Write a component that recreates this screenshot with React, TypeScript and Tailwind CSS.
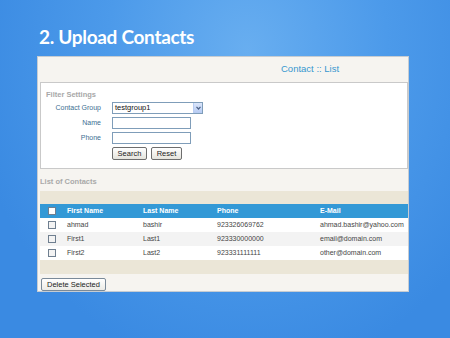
import React from 'react';

const contacts = [
  { first: 'ahmad', last: 'bashir', phone: '923326069762', email: 'ahmad.bashir@yahoo.com' },
  { first: 'First1', last: 'Last1', phone: '923330000000', email: 'email@domain.com' },
  { first: 'First2', last: 'Last2', phone: '923331111111', email: 'other@domain.com' },
];

const Checkbox: React.FC<{ header?: boolean }> = ({ header }) => (
  <span
    className={`block w-[8px] h-[8px] border border-[#6f7f90] ${
      header ? 'bg-white' : 'bg-[#f3f3f3]'
    }`}
  />
);

const XpButton: React.FC<{ label: string; className?: string }> = ({ label, className }) => (
  <button
    className={`block h-[13px] rounded-[2px] border border-[#6d6d6d] bg-[linear-gradient(#ffffff,#e4e3dc)] text-[7.5px] leading-none text-[#222] ${className ?? ''}`}
  >
    {label}
  </button>
);

export default function App() {
  return (
    <div
      className="w-[450px] h-[338px] overflow-hidden bg-[radial-gradient(ellipse_at_55%_15%,#68aef0_0%,#4c9aea_40%,#3a8ae2_80%)]"
      style={{ fontFamily: '"Liberation Sans", Arial, sans-serif' }}
    >
      {/* Slide title */}
      <h1
        className="pl-[39px] pt-[25px] h-[56px] text-[19px] font-bold text-white tracking-[-0.3px] leading-[24px]"
        style={{ fontFamily: 'Lato, "Open Sans", sans-serif' }}
      >
        2. Upload Contacts
      </h1>

      {/* Panel */}
      <div className="ml-[37px] w-[372px] h-[236px] border border-[#c6ccd2] bg-[#f6f4f0] pl-[2px] flex flex-col">
        <div className="shrink-0 h-[25px] flex items-center pl-[241px]">
          <span className="text-[9.5px] text-[#3797cf]">Contact :: List</span>
        </div>

        {/* Filter settings */}
        <div className="shrink-0 h-[87px] border border-[#c9c9c9] bg-white px-[5px] pt-[6px]">
          <div className="h-[11px] text-[7.5px] font-bold text-[#a8a8a8] leading-[11px]">Filter Settings</div>
          <div className="mt-[2px] grid grid-cols-[55px_auto] gap-x-[11px] gap-y-[3px] items-center text-[7px] text-[#3d6f92]">
            <span className="text-right">Contact Group</span>
            <div className="w-[91px] h-[12px] border border-[#7f9db9] flex items-center justify-between pl-[2px]">
              <span className="text-[7.5px] text-[#111]">testgroup1</span>
              <span className="w-[9px] h-[10px] bg-[linear-gradient(#dbe6fb,#b6cbf3)] border-l border-[#b9cdf2] flex items-center justify-center">
                <svg width="5" height="4" viewBox="0 0 5 4">
                  <path d="M0.5 0.8 L2.5 3 L4.5 0.8" stroke="#4d6185" strokeWidth="1.2" fill="none" />
                </svg>
              </span>
            </div>
            <span className="text-right">Name</span>
            <div className="w-[79px] h-[12px] border border-[#7f9db9] bg-white" />
            <span className="text-right">Phone</span>
            <div className="w-[79px] h-[12px] border border-[#7f9db9] bg-white" />
            <span />
            <div className="flex gap-[4px]">
              <XpButton label="Search" className="w-[35px]" />
              <XpButton label="Reset" className="w-[31px]" />
            </div>
          </div>
        </div>

        <div className="shrink-0 h-[22px] flex items-center pt-[3px]">
          <span className="text-[7.5px] font-bold text-[#a9a9a9]">List of Contacts</span>
        </div>

        {/* Contacts table */}
        <div className="shrink-0 h-[13px] bg-[#ebe6d7]" />
        <div className="shrink-0 h-[14px] bg-[#3399d6] grid grid-cols-[22px_76px_74px_103px_1fr] items-center text-[7px] font-bold text-white">
          <span className="flex justify-center pl-[2px]">
            <Checkbox header />
          </span>
          <span className="pl-[5px]">First Name</span>
          <span className="pl-[5px]">Last Name</span>
          <span className="pl-[5px]">Phone</span>
          <span className="pl-[5px]">E-Mail</span>
        </div>
        {contacts.map((c, i) => (
          <div
            key={c.phone}
            className={`shrink-0 h-[14px] grid grid-cols-[22px_76px_74px_103px_1fr] items-center text-[7px] text-[#454545] ${
              i === 1 ? 'bg-[#f3f3f3]' : 'bg-white'
            }`}
          >
            <span className="flex justify-center pl-[2px]">
              <Checkbox />
            </span>
            <span className="pl-[5px]">{c.first}</span>
            <span className="pl-[5px]">{c.last}</span>
            <span className="pl-[5px]">{c.phone}</span>
            <span className="pl-[5px]">{c.email}</span>
          </div>
        ))}
        <div className="shrink-0 h-[14px] bg-[#ebe6d7]" />

        <div className="flex-1 min-h-0 flex items-start pt-[4px] pl-[1px]">
          <XpButton label="Delete Selected" className="w-[65px] h-[12px] bg-[linear-gradient(#ffffff,#ecebe6)] border-[#7a8a99]" />
        </div>
      </div>
    </div>
  );
}
